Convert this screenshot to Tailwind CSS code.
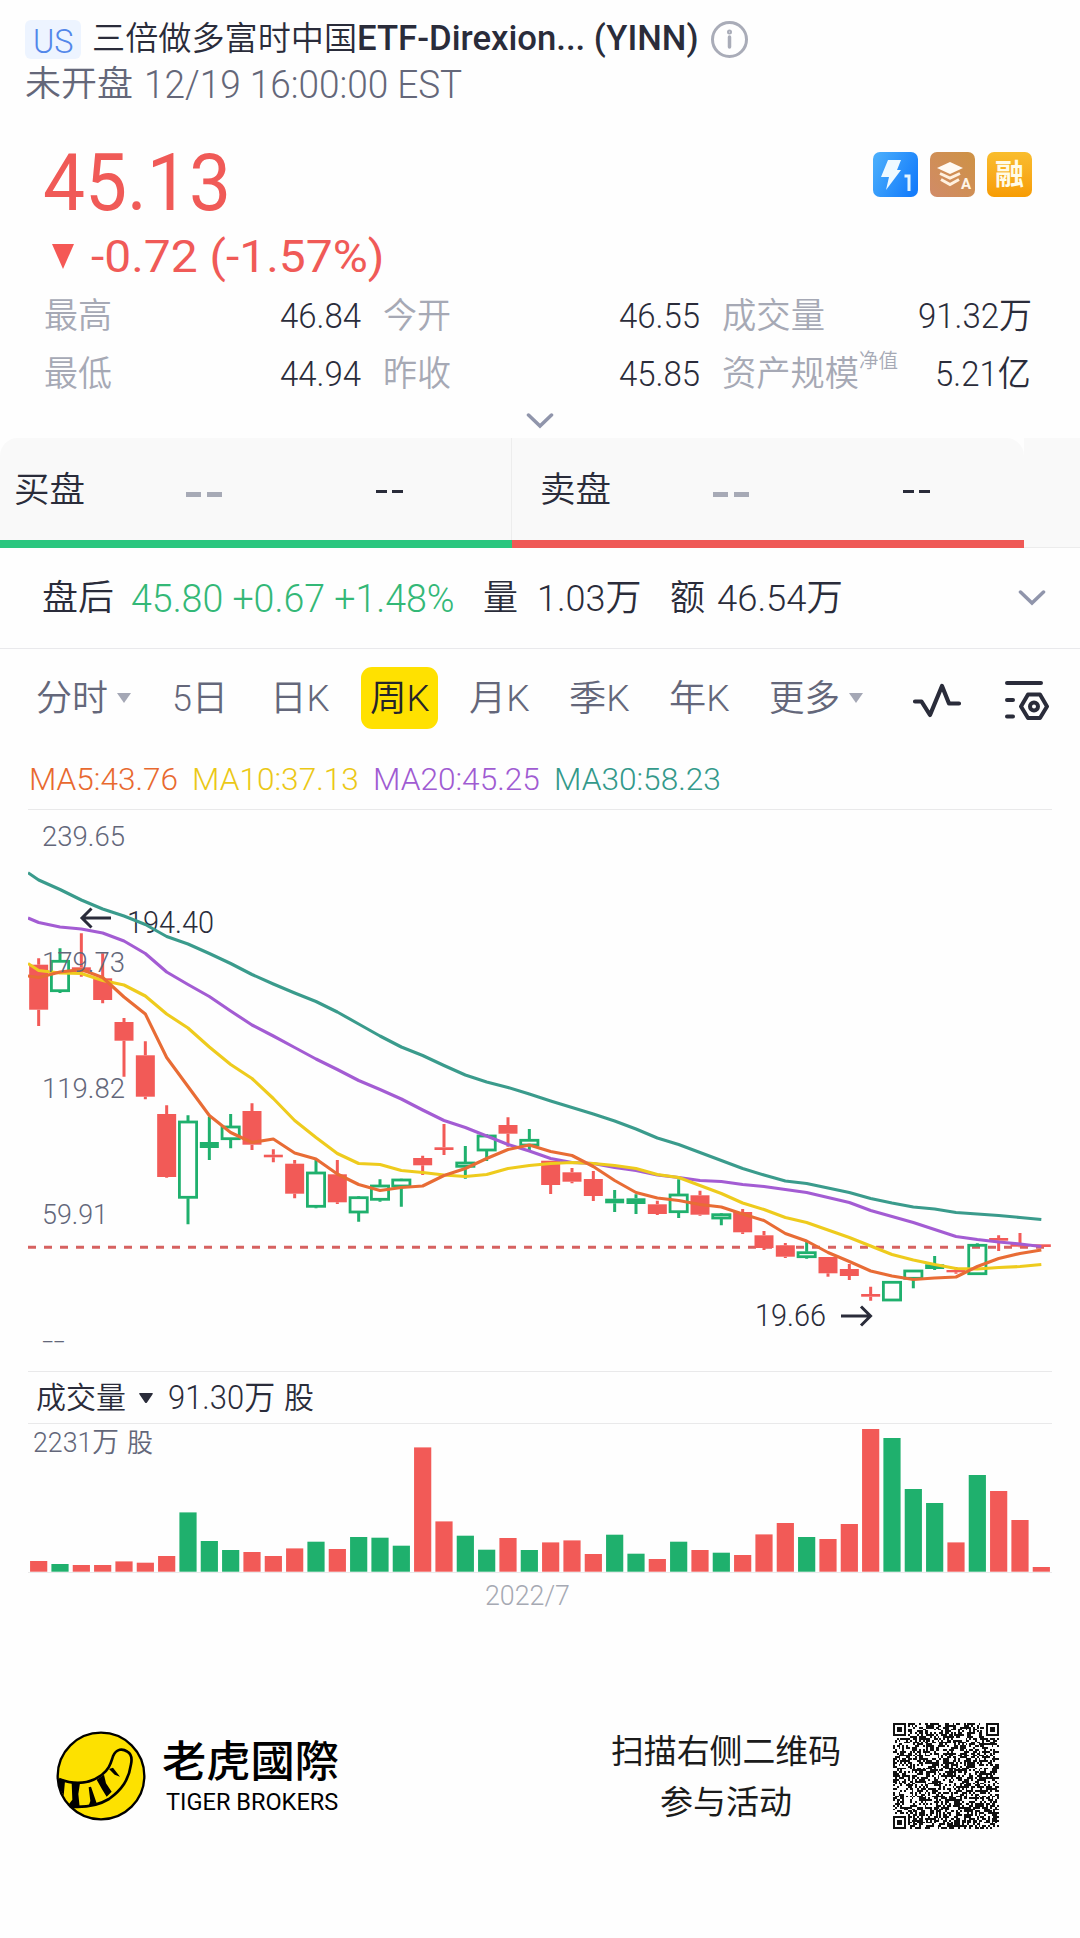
<!DOCTYPE html>
<html lang="zh-CN">
<head>
  <meta charset="UTF-8" />
  <meta name="viewport" content="width=device-width, initial-scale=1.0" />
  <title>YINN</title>
  <script src="https://cdn.jsdelivr.net/npm/@tailwindcss/browser@4"></script>
</head>
<body class="bg-[#fefefe] w-[1080px] h-[1938px] overflow-hidden font-['Roboto','Noto_Sans_CJK_SC',sans-serif] text-[#2a2c3a]">

  <!-- Title -->
  <header class="h-[120px] pt-[18px] pl-[25px]">
    <div class="flex items-center h-[42px] text-[33px]">
      <div class="w-14 h-[39px] rounded-md bg-[#edf4ff] flex items-center justify-center pt-1 text-[#5287ea] text-[34px] font-[350]"><span data-fit class="w-[41px]">US</span></div>
      <span data-fit class="ml-[11px] w-[265px] font-[350]">三倍做多富时中国</span>
      <span data-fit class="w-[342px] text-[35px] font-medium">ETF-Direxion... (YINN)</span>
      <svg class="ml-3 w-[38px] h-[38px]" viewBox="0 0 38 38" fill="none" stroke="#a9acb8" stroke-width="3">
        <circle cx="18.500" cy="19.500" r="17" />
        <path d="M18.500 17v10" stroke-linecap="round" stroke-width="3.5" />
        <circle cx="18.500" cy="12" r="1" />
      </svg>
    </div>
    <div class="flex items-center h-[50px] text-[#646779] font-[350]">
      <span data-fit class="w-[108px] text-[35px]">未开盘</span>
      <span data-fit class="ml-[11px] w-[318px] text-[38px]">12/19 16:00:00 EST</span>
    </div>
  </header>

  <!-- Price -->
  <section class="h-[166px] flex justify-between pl-[43px] pr-[48px]">
    <div class="text-[#f05a57]">
      <div class="h-[120px] flex items-center pt-[5px]"><span data-fit class="w-[188px] text-[80px] font-[450]">45.13</span></div>
      <div class="h-[32px] flex items-center">
        <svg class="ml-[8px] w-6 h-[26px]" viewBox="0 0 24 26"><path d="M1 1h22L12 26z" fill="#f55855" /></svg>
        <span data-fit class="ml-4 w-[294px] pt-0.5 text-[45px] font-[450]">-0.72 (-1.57%)</span>
      </div>
    </div>
    <div class="flex gap-3 pt-[32px]">
      <svg class="w-[45px] h-[45px]" viewBox="0 0 45 45">
        <defs><linearGradient id="blue" x1="0" y1="0.2" x2="1" y2="0.7"><stop offset="0" stop-color="#49adfc" /><stop offset="1" stop-color="#147cfb" /></linearGradient></defs>
        <rect width="45" height="45" rx="7" fill="url(#blue)" />
        <path d="M15 8h13l-4 10h4L13 38l3-13H8z" fill="#eef9ff" />
        <path d="M31.500 24h4.500v15" fill="none" stroke="#e5f5ff" stroke-width="3" />
      </svg>
      <svg class="w-[45px] h-[45px]" viewBox="0 0 45 45">
        <defs><linearGradient id="bronze" x1="0" y1="1" x2="1" y2="0"><stop offset="0" stop-color="#d18b68" /><stop offset="1" stop-color="#ce9244" /></linearGradient></defs>
        <rect width="45" height="45" rx="7" fill="url(#bronze)" />
        <path d="M7 16l13-6 13 6-13 6z" fill="#fffaf3" />
        <path d="M10 21.500l10 4.500 10-4.500M11 27.500l9 5 9-5" fill="none" stroke="#fff1df" stroke-width="3" />
        <text x="31" y="37" font-size="15" font-weight="700" fill="#fff6e8">A</text>
      </svg>
      <div class="w-[45px] h-[45px] rounded-[7px] bg-linear-to-b from-[#f9bd2d] to-[#f79c02] flex items-center justify-center pt-0.5 text-[29px] leading-none font-bold text-[#fffbe8]">融</div>
    </div>
  </section>

  <!-- Stats -->
  <section class="h-[152px] pt-[2px] text-[35px] font-[350]">
    <div class="h-[58px] flex items-center pl-[44px]">
      <span data-fit class="w-[68px] text-[#a6a9b5]">最高</span>
      <span data-fit class="ml-[168px] w-[81px]">46.84</span>
      <span data-fit class="ml-[22px] w-[68px] text-[#a6a9b5]">今开</span>
      <span data-fit class="ml-[168px] w-[81px]">46.55</span>
      <span data-fit class="ml-[22px] w-[103px] text-[#a6a9b5]">成交量</span>
      <span data-fit class="ml-[93px] w-[114px]">91.32万</span>
    </div>
    <div class="h-[58px] flex items-center pl-[44px]">
      <span data-fit class="w-[68px] text-[#a6a9b5]">最低</span>
      <span data-fit class="ml-[168px] w-[81px]">44.94</span>
      <span data-fit class="ml-[22px] w-[68px] text-[#a6a9b5]">昨收</span>
      <span data-fit class="ml-[168px] w-[81px]">45.85</span>
      <span data-fit class="ml-[22px] w-[137px] text-[#a6a9b5]">资产规模</span>
      <span data-fit class="w-[39px] text-[20px] text-[#a6a9b5] -mt-7">净值</span>
      <span data-fit class="ml-[37px] w-[96px]">5.21亿</span>
    </div>
    <svg class="mx-auto mt-[9px] w-7 h-4" viewBox="0 0 28 16" fill="none" stroke="#9095ab" stroke-width="3.500" stroke-linecap="round"><path d="M2.500 2L14 13 25.500 2" /></svg>
  </section>

  <!-- Bid / ask -->
  <section class="h-[110px] flex bg-[#fefefe]">
    <div class="w-[1024px] flex rounded-t-[18px] overflow-hidden bg-[#f9f9f9] font-[350]">
      <div class="w-[512px] border-b-8 border-[#2bc67f] flex items-center pl-[14px]">
        <span data-fit class="w-[71px] pt-1 text-[35px]">买盘</span>
        <div class="ml-[101px] mt-2.5 flex gap-1.5"><i class="w-[15px] h-[5px] bg-[#a7aab6]"></i><i class="w-[15px] h-[5px] bg-[#a7aab6]"></i></div>
        <div class="ml-[154px] mt-1 flex gap-[5px]"><i class="w-[11px] h-[3px] bg-[#2a2c3a]"></i><i class="w-[11px] h-[3px] bg-[#2a2c3a]"></i></div>
        <i class="ml-[108px] w-px h-full bg-[#ededed]"></i>
      </div>
      <div class="w-[512px] border-b-8 border-[#ef5956] flex items-center pl-[28px]">
        <span data-fit class="w-[71px] pt-1 text-[35px]">卖盘</span>
        <div class="ml-[102px] mt-2.5 flex gap-1.5"><i class="w-[15px] h-[5px] bg-[#a7aab6]"></i><i class="w-[15px] h-[5px] bg-[#a7aab6]"></i></div>
        <div class="ml-[154px] mt-1 flex gap-[5px]"><i class="w-[11px] h-[3px] bg-[#2a2c3a]"></i><i class="w-[11px] h-[3px] bg-[#2a2c3a]"></i></div>
      </div>
    </div>
    <div class="grow bg-[#f9f9f9] border-b border-[#ececec]"></div>
  </section>

  <!-- After hours -->
  <section class="h-[101px] border-b border-[#e9e9ec] flex items-center pt-0.5 pl-[42px] text-[35px] font-[350]">
    <span data-fit class="w-[72px]">盘后</span>
    <span data-fit class="ml-[17px] w-[324px] text-[38px] text-[#33b877]">45.80 +0.67 +1.48%</span>
    <span data-fit class="ml-[28px] w-[35px]">量</span>
    <span data-fit class="ml-[19px] w-[104px] text-[37px]">1.03万</span>
    <span data-fit class="ml-[29px] w-[35px]">额</span>
    <span data-fit class="ml-[12px] w-[126px] text-[37px]">46.54万</span>
    <svg class="ml-[175px] -mt-0.5 w-7 h-4" viewBox="0 0 28 16" fill="none" stroke="#9095ab" stroke-width="3.500" stroke-linecap="round"><path d="M2.500 2L14 13 25.500 2" /></svg>
  </section>

  <!-- Period tabs -->
  <nav class="h-[98px] flex items-center pl-[36px] text-[36px] text-[#64677a] font-[350]">
    <span data-fit class="w-[72px] pt-0.5">分时</span>
    <svg class="ml-2 w-4 h-3" viewBox="0 0 16 12"><path d="M1 1h14L8 11z" fill="#a4a7b5" /></svg>
    <span data-fit class="ml-[40px] w-[56px] pt-0.5">5日</span>
    <span data-fit class="ml-[42px] w-[60px] pt-0.5">日K</span>
    <div class="ml-[31px] w-[77px] h-[62px] rounded-[11px] bg-[#ffe100] flex items-center justify-center text-[#24242a]"><span data-fit class="w-[60px] pt-0.5">周K</span></div>
    <span data-fit class="ml-[31px] w-[61px] pt-0.5">月K</span>
    <span data-fit class="ml-[39px] w-[61px] pt-0.5">季K</span>
    <span data-fit class="ml-[39px] w-[61px] pt-0.5">年K</span>
    <span data-fit class="ml-[39px] w-[71px] pt-0.5">更多</span>
    <svg class="ml-2 w-4 h-3" viewBox="0 0 16 12"><path d="M1 1h14L8 11z" fill="#a4a7b5" /></svg>
    <svg class="ml-[47px] mt-1 w-[52px] h-[38px]" viewBox="0 0 52 38" fill="none" stroke="#2a2c3a" stroke-width="4.200" stroke-linecap="round" stroke-linejoin="round"><path d="M4 20.500h6.500L19 34 31 5l7 17.500h10" /></svg>
    <svg class="ml-[39px] mt-1 w-[48px] h-[42px]" viewBox="0 0 48 42" fill="none" stroke="#2a2c3a" stroke-width="4" stroke-linecap="round" stroke-linejoin="round">
      <path d="M5 4h34M5 21h6M5 37.500h6M26 15.500h12l7 12-7 11.500H26L19 27.500z" />
      <circle cx="32" cy="27.500" r="4" />
    </svg>
  </nav>

  <div class="h-[62px] pl-[29px] pt-0.5 flex items-center text-[32px] font-[350]">
    <span data-fit class="w-[149px] text-[#e8692f]">MA5:43.76</span>
    <span data-fit class="ml-[14px] w-[167px] text-[#ebc816]">MA10:37.13</span>
    <span data-fit class="ml-[14px] w-[167px] text-[#a05bd2]">MA20:45.25</span>
    <span data-fit class="ml-[14px] w-[167px] text-[#33998a]">MA30:58.23</span>
  </div>

  <!-- K line -->
  <section class="mx-[28px] w-[1024px] h-[563px] border-y border-[#e9e9ea]">
    <svg id="kline" class="w-[1024px] h-[561px] font-[350]" viewBox="28 810 1024 561"></svg>
  </section>

  <!-- Volume -->
  <section class="mx-[28px] w-[1024px]">
    <div class="h-[52px] flex items-center pl-[8px] text-[31px] font-[350] border-b border-[#e9e9ea]">
      <span data-fit class="w-[90px] text-[30px]">成交量</span>
      <svg class="ml-[12px] w-4 h-3" viewBox="0 0 16 12"><path d="M2 1h12q1.500 0 .6 1.200L9 10.500q-1 1-2 0L1.400 2.200Q.5 1 2 1z" fill="#2a2c3a" /></svg>
      <span data-fit class="ml-[14px] w-[107px] text-[33px]">91.30万</span>
      <span data-fit class="ml-[9px] w-[30px] text-[30px]">股</span>
    </div>
    <svg id="volume" class="w-[1024px] h-[200px] font-[350]" viewBox="28 1424 1024 200"></svg>
  </section>

  <!-- Footer -->
  <footer class="mt-[76px] h-[152px] flex items-center pl-[56px]">
    <svg class="w-[90px] h-[90px]" viewBox="47 94 270 270">
      <circle cx="182" cy="229" r="130" fill="#fde100" />
      <path d="M56 238C105 257 148 252 184 226C208 208 211 190 218 170C228 146 247 146 261 156C275 164 275 180 272 194C265 241 245 269 206 298C171 319 132 324 91 321" fill="none" stroke="#000" stroke-width="8" />
      <path d="M54 238l20 7-4 43-13-24zM94 249l25 1-5 33 4 39-36-4 14-18zM145 263l7-2 17 50-24 7 5-14zM169 240l22-15 6 26 17 25-15 15-13-21zM206 208l12-4 21 27-16-6z" fill="#000" />
      <circle cx="182" cy="229" r="130" fill="none" stroke="#000" stroke-width="7" />
    </svg>
    <div class="ml-[16px] pt-1 text-black leading-none">
      <div class="h-[46px] flex items-center -mt-1"><span data-fit class="w-[177px] text-[43px] font-medium font-['Noto_Sans_CJK_TC',sans-serif]">老虎國際</span></div>
      <div class="h-[30px] mt-1.5 flex items-center"><span data-fit class="ml-[4px] w-[172px] text-[23px]">TIGER BROKERS</span></div>
    </div>
    <div class="ml-[272px] w-[230px] flex flex-col items-center pt-0.5 text-[33px] text-[#1b1b1b]">
      <div class="h-[51px] flex items-center"><span data-fit class="w-[230px]">扫描右侧二维码</span></div>
      <div class="h-[51px] flex items-center"><span data-fit class="w-[132px]">参与活动</span></div>
    </div>
    <svg id="qr" class="ml-[52px] w-[106px] h-[106px]" viewBox="0 0 57 57" shape-rendering="crispEdges"></svg>
  </footer>

  <script>
    // squeeze each label to the width of its box
    function fit(el) {
      const inner = el.firstElementChild;
      if (!el.clientWidth || !inner.offsetWidth) return;
      inner.style.transform = `scaleX(${el.clientWidth / inner.offsetWidth})`;
    }
    const observer = new ResizeObserver((entries) => entries.forEach((e) => fit(e.target.closest("[data-fit]"))));
    document.querySelectorAll("[data-fit]").forEach(function (el) {
      const inner = document.createElement("span");
      inner.className = "inline-block origin-left whitespace-nowrap";
      inner.textContent = el.textContent;
      el.textContent = "";
      el.classList.add("block", "shrink-0");
      el.appendChild(inner);
      fit(el);
      observer.observe(el);
      observer.observe(inner);
    });

    const RED = "#f25a57", GREEN = "#1fb06d";
    const x0 = 38.67, step = 21.333;

    // type (r = filled red, g = hollow green, f = filled green), body top, body bottom, high, low
    const candles = [
      ["r",964.7,1009.7,958.3,1026],["g",960.3,991.7,948.3,993],["r",967.3,972.3,933.3,976.7],["r",978.3,1000,953.3,1003.3],
      ["r",1022,1040.7,1018,1076.7],["r",1055.3,1096.7,1041.3,1099.3],["r",1114,1177,1105.3,1177.7],["g",1121,1198.3,1115.3,1224.3],
      ["f",1142,1148,1116.7,1160],["g",1126,1139.7,1114,1148.3],["r",1111,1144.7,1103.3,1150],["r",1154.7,1157.3,1149.3,1162.3],
      ["r",1163.7,1193.7,1160,1198.3],["g",1172,1207.3,1159.3,1208.3],["r",1174.3,1202.3,1160,1204],["g",1196.7,1213,1196,1221.7],
      ["g",1185,1200.3,1179.3,1201.7],["g",1179,1187,1178.7,1206.7],["r",1158,1165.3,1155.7,1175],["r",1147.3,1150,1124,1155],
      ["g",1162,1167.3,1146,1178.7],["g",1135,1151,1134.3,1161],["r",1125,1133.7,1117.3,1146.7],["g",1139.3,1146,1129,1150],
      ["r",1160.7,1185,1160.7,1194],["r",1172.3,1181.7,1168,1183.3],["r",1179,1196,1171,1201],["f",1198.7,1203.3,1190,1212],
      ["f",1198.3,1204,1194.3,1214],["r",1204.3,1214,1200.7,1215],["g",1194,1212.7,1179.3,1218],["r",1195.3,1214.7,1190.7,1215.7],
      ["g",1213.7,1219,1213,1225.3],["r",1212,1232.3,1209,1234],["r",1235.3,1248,1231,1250],["r",1245.3,1256.7,1243,1258],
      ["g",1251.7,1257.7,1241.7,1258.7],["r",1257,1273.3,1257,1276.7],["r",1269,1276,1264,1280],["r",1294,1296.7,1286.7,1300.7],
      ["g",1281.3,1301,1281,1301],["g",1270,1279.3,1270,1288.3],["f",1264.3,1269,1256,1270],["r",1270,1272.3,1267,1273.7],
      ["g",1244.3,1274.7,1243.3,1274.7],["r",1238,1240.7,1235.3,1251],["r",1244,1246.7,1233,1247.3],["r",1244.3,1247,1244.3,1247]
    ];

    // first value is at the left edge of the plot
    const averages = {
      "#3a9b8c": [872.7,880,889.5,900,909,916,924.5,936.5,944,953.5,963.5,974.5,984,993,1001.5,1012,1024,1036,1047,1055.5,1065.5,1075,1082,1087.5,1094,1101,1107.5,1114,1121,1129,1138,1144.5,1152.5,1160.5,1168.5,1175,1181,1183.5,1188,1192.5,1198.5,1203,1207,1209,1212.5,1214,1215.5,1217.5,1219.5],
      "#a35cd3": [918,922.5,927,929,933,941,953.5,972,984.5,996.5,1011,1025,1036,1047.5,1059,1069.5,1080.5,1089.5,1099,1110,1120.5,1127.5,1136,1144.5,1151,1158.5,1162.5,1163.5,1167.5,1170.5,1175,1177.5,1180.5,1181.5,1184.5,1186.5,1189.5,1192.5,1197.5,1202.5,1210.5,1216.5,1222.5,1229.5,1236.5,1239.5,1242,1244,1246.5],
      "#eecb1d": [963.5,970.5,973,973.5,980.5,985,996,1014,1028,1047,1064.5,1078.5,1098.5,1120.5,1137.5,1153.5,1163.5,1164.5,1170.5,1172.5,1175,1176.5,1174.5,1168.5,1165.5,1163.5,1162.5,1163.5,1165.5,1168.5,1174.5,1177.5,1185.5,1193.5,1203,1209.5,1217.5,1222.5,1230,1237.5,1246,1254.5,1260,1264.5,1268.5,1269,1267.5,1266.5,1264.5],
      "#e86c35": [976,977.5,972,969.5,977.5,997,1014,1057.5,1086.5,1115.5,1132.5,1142.5,1139,1153,1159,1174,1184.5,1190.5,1187.5,1186,1175.5,1168.5,1158.5,1149.5,1145,1151.5,1155.5,1166.5,1180.5,1192.5,1198,1200.5,1204.5,1207,1214,1220.5,1233.5,1241,1252.5,1261.5,1271,1276,1279.5,1278,1277,1266.5,1258.5,1253.5,1250]
    };

    function label(text, x, y, width, size, color) {
      return `<text x="${x}" y="${y}" textLength="${width}" lengthAdjust="spacingAndGlyphs" font-size="${size}" fill="${color}">${text}</text>`;
    }

    let k = label("194.40", 127, 933, 87, 31, "#2a2c3a");
    k += `<path d="M28 1247.300H1046" stroke="#d66160" stroke-width="3" stroke-dasharray="8 8" />`;
    candles.forEach(function ([type, top, bottom, high, low], i) {
      const x = x0 + i * step;
      const color = type === "r" ? RED : GREEN;
      k += `<path d="M${x} ${high}V${top}M${x} ${bottom}V${low}" stroke="${color}" stroke-width="3" />`;
      if (type === "g") {
        k += `<rect x="${x - 8.6}" y="${top + 1}" width="17.2" height="${bottom - top - 2}" fill="none" stroke="${color}" stroke-width="2.8" />`;
      } else {
        k += `<rect x="${x - 9.5}" y="${top}" width="19" height="${bottom - top}" fill="${color}" />`;
      }
    });
    for (const color in averages) {
      const points = averages[color].map((y, i) => (i === 0 ? 28 : x0 + (i - 1) * step) + "," + y).join(" ");
      k += `<polyline points="${points}" fill="none" stroke="${color}" stroke-width="3.1" stroke-linejoin="round" />`;
    }
    k += label("239.65", 42, 846, 83, 28, "#63677a");
    k += label("179.73", 42, 972, 83, 28, "#63677a");
    k += label("119.82", 42, 1098, 83, 28, "#63677a");
    k += label("59.91", 42, 1224, 66, 28, "#63677a");
    k += label("--", 42, 1350, 23, 28, "#63677a");
    k += label("19.66", 755, 1326, 71, 31, "#2a2c3a");
    k += `<path d="M111 918H82M91.500 908.500L82 918l9.500 9.500M841 1316h29M861 1306.500l9.500 9.500-9.500 9.500" fill="none" stroke="#2a2c3a" stroke-width="3" />`;
    document.getElementById("kline").innerHTML = k;

    const volumes = [10.7,7.7,6.7,6.7,10.3,9,15.7,59.3,30.7,21.7,19.7,15.7,23.3,30,22.7,34.7,34,26,124.3,50.3,36,22,33.7,21.7,
      29.3,31.3,17.7,37,18,12.7,30,21.7,19,16.7,37.3,48.7,34.7,32.7,47.7,142.7,133.7,82.7,68.7,29.3,96.7,80.7,51.7,4.7];
    let v = `<path d="M28 1572.500H1053" stroke="#e9e9ea" />`;
    volumes.forEach(function (h, i) {
      v += `<rect x="${x0 + i * step - 8.6}" y="${1571.7 - h}" width="17.2" height="${h}" fill="${candles[i][0] === "r" ? RED : GREEN}" />`;
    });
    v += label("2231万", 33, 1452, 86, 28, "#63677a");
    v += `<text x="127" y="1452" font-size="26" fill="#63677a">股</text>`;
    v += label("2022/7", 485, 1605, 85, 28, "#a6a9b3");
    document.getElementById("volume").innerHTML = v;

    // QR code
    const N = 57;
    let seed = 20221219;
    function random() {
      seed = (seed * 1103515245 + 12345) % 2147483648;
      return seed / 2147483648;
    }
    function finder(x, y) {
      return `M${x} ${y}h7v7h-7zM${x + 1} ${y + 1}v5h5v-5zM${x + 2} ${y + 2}h3v3h-3z`;
    }
    let d = finder(0, 0) + finder(N - 7, 0) + finder(0, N - 7);
    for (let y = 0; y < N; y++) {
      for (let x = 0; x < N; x++) {
        const on = random() < 0.52;
        if ((x < 8 && y < 8) || (x > N - 9 && y < 8) || (x < 8 && y > N - 9)) continue;
        if (on) d += `M${x} ${y}h1v1h-1z`;
      }
    }
    document.getElementById("qr").innerHTML = `<path d="${d}" fill="#111" />`;
  </script>
</body>
</html>
